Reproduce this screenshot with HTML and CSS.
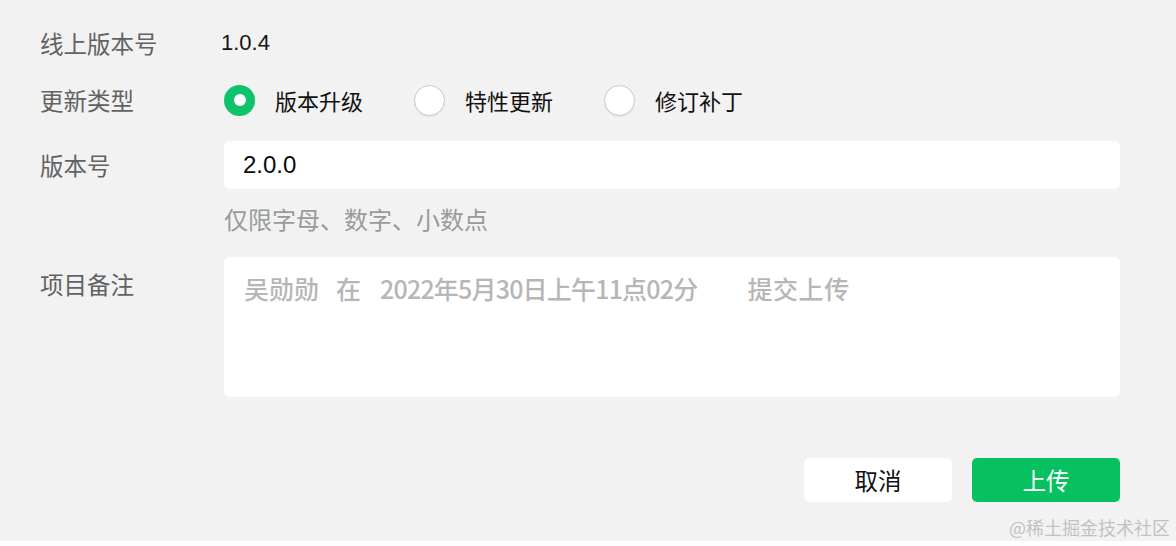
FILE: index.html
```html
<!DOCTYPE html>
<html lang="zh-CN">
<head>
<meta charset="utf-8">
<title>上传版本</title>
<link rel="stylesheet" href="styles.css">
</head>
<body>
<div class="page">
  <div class="form">
    <div class="row row-online">
      <div class="label">线上版本号</div>
      <div class="value">1.0.4</div>
    </div>
    <div class="row row-type">
      <div class="label">更新类型</div>
      <div class="radios">
        <div class="radio checked"><span class="dot"></span><span class="rtext">版本升级</span></div>
        <div class="radio"><span class="dot"></span><span class="rtext">特性更新</span></div>
        <div class="radio"><span class="dot"></span><span class="rtext">修订补丁</span></div>
      </div>
    </div>
    <div class="row row-version">
      <div class="label">版本号</div>
      <div class="input">2.0.0</div>
    </div>
    <div class="hint">仅限字母、数字、小数点</div>
    <div class="row row-note">
      <div class="label">项目备注</div>
      <div class="textarea"><div class="placeholder"><span class="seg">吴勋勋</span><span class="seg s-at">在</span><span class="seg s-time">2022年5月30日上午11点02分</span><span class="seg s-act">提交上传</span></div></div>
    </div>
    <div class="actions">
      <div class="btn btn-cancel">取消</div>
      <div class="btn btn-primary">上传</div>
    </div>
  </div>
  <div class="strip"></div>
  <div class="watermark">@稀土掘金技术社区</div>
</div>
</body>
</html>
```
FILE: styles.css
```css
* { box-sizing: border-box; }
html, body {
  margin: 0;
  padding: 0;
  background: #f2f2f2;
}
body {
  font-family: "Noto Sans CJK SC", "Noto Sans", sans-serif;
  width: 1176px;
  height: 546px;
  overflow: hidden;
}
.page {
  position: relative;
  width: 1176px;
  height: 546px;
  display: flex;
  flex-direction: column;
}
.form {
  padding: 23px 56px 0 40px;
  display: flex;
  flex-direction: column;
}
.row {
  display: flex;
  align-items: center;
}
.label {
  width: 184px;
  flex: 0 0 184px;
  font-size: 23.5px;
  line-height: 32px;
  color: #626262;
}
.row-online { height: 40px; }
.value {
  font-family: "Liberation Sans", Arial, sans-serif;
  font-size: 22px;
  color: #151515;
  margin-left: -3px;
}
.row-type { height: 40px; margin-top: 17px; }
.radios { display: flex; }
.radio {
  flex: 0 0 190px;
  display: flex;
  align-items: center;
}
.dot {
  width: 31px;
  height: 31px;
  border-radius: 50%;
  background: #fff;
  border: 1px solid #c9c9c9;
  box-shadow: 0 1px 1px rgba(0,0,0,0.06);
  margin-right: 20px;
  display: flex;
  align-items: center;
  justify-content: center;
}
.radio.checked .dot {
  background: #0fc36a;
  border: none;
  box-shadow: none;
}
.radio.checked .dot::after {
  content: "";
  width: 12px;
  height: 12px;
  border-radius: 50%;
  background: #fff;
}
.rtext {
  font-size: 22px;
  line-height: 32px;
  color: #111;
}
.row-version { margin-top: 21px; }
.input {
  flex: 1;
  height: 48px;
  background: #fff;
  border-radius: 6px;
  padding-left: 19px;
  display: flex;
  align-items: center;
  font-family: "Liberation Sans", Arial, sans-serif;
  font-size: 24px;
  color: #0a0a0a;
}
.hint {
  margin-top: 14px;
  padding-left: 184px;
  font-size: 24px;
  line-height: 32px;
  color: #9a9a9a;
}
.row-note {
  margin-top: 22px;
  align-items: flex-start;
}
.row-note .label { margin-top: 11px; }
.textarea {
  flex: 1;
  height: 140px;
  background: #fff;
  border-radius: 6px;
  padding: 15px 0 0 20px;
}
.placeholder {
  display: flex;
  white-space: nowrap;
  font-size: 25px;
  line-height: 32px;
  color: #b6b6b6;
  font-weight: 500;
}
.s-at { margin-left: 17px; }
.s-time { margin-left: 19px; letter-spacing: -0.8px; }
.s-act { margin-left: 50px; letter-spacing: 0.6px; }
.actions {
  margin-top: 61px;
  display: flex;
  justify-content: flex-end;
  gap: 20px;
}
.btn {
  width: 148px;
  height: 44px;
  border-radius: 5px;
  display: flex;
  align-items: center;
  justify-content: center;
  font-size: 23.5px;
}
.btn-cancel { background: #fff; color: #111; }
.btn-primary { background: #07c160; color: #fff; }
.strip {
  margin-top: auto;
  height: 5px;
  background: #fff;
}
.watermark {
  position: absolute;
  right: 6px;
  top: 514px;
  font-size: 18px;
  line-height: 26px;
  color: #c2c2c2;
}
```
